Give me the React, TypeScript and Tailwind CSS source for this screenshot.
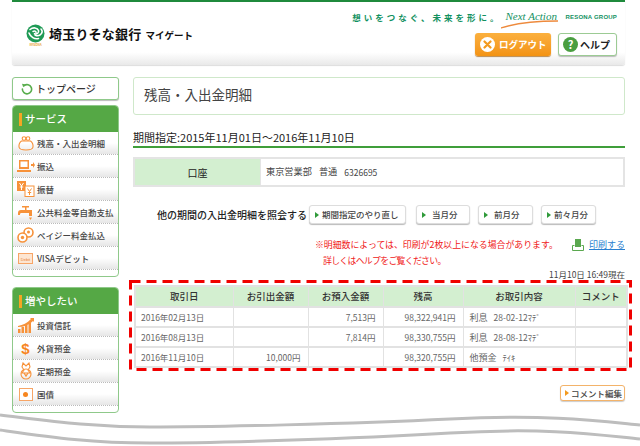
const jp = "font-['Noto_Sans_CJK_JP','Liberation_Sans',sans-serif]";

const serviceMenu = [
  { label: "残高・入出金明細", icon: <PurseIcon /> },
  { label: "振込", icon: <TransferIcon /> },
  { label: "振替", icon: <YenIcon /> },
  { label: "公共料金等自動支払", icon: <FaucetIcon /> },
  { label: "ペイジー料金払込", icon: <CoinsIcon /> },
  { label: "VISAデビット", icon: <DebitIcon /> },
];

const growMenu = [
  { label: "投資信託", icon: <BarsIcon /> },
  { label: "外貨預金", icon: <DollarIcon /> },
  { label: "定期預金", icon: <MedalIcon /> },
  { label: "国債", icon: <BondIcon /> },
];

const rows = [
  { date: "2016年02月13日", out: "", inn: "7,513円", bal: "98,322,941円", memo: "利息", memo2: "28-02-12ﾏﾃﾞ" },
  { date: "2016年08月13日", out: "", inn: "7,814円", bal: "98,330,755円", memo: "利息", memo2: "28-08-12ﾏﾃﾞ" },
  { date: "2016年11月10日", out: "10,000円", inn: "", bal: "98,320,755円", memo: "他預金", memo2: "ﾃｲｷ" },
];

export default function App() {
  return (
    <div className={`${jp} flex h-[446px] w-[640px] flex-col overflow-hidden bg-white text-[#333]`}>
      <Header />
      <div className="mt-3 ml-3 flex w-[613px] gap-[14px]">
        <Sidebar />
        <Main />
      </div>
      <Waves />
    </div>
  );
}

function Header() {
  return (
    <header className="ml-3 flex h-[65px] w-[613px] shrink-0 justify-between rounded-b-[3px] border-t-2 border-[#1f8a3c] bg-gradient-to-b from-white from-80% to-[#e9e9e9] shadow-[0_1px_1px_#ddd]">
      <div className="ml-[14px] mt-[22px] flex h-[25px] items-start">
        <div className="flex w-[19px] flex-col items-center">
          <LogoMark />
          <span className="mt-px text-[3px] leading-none font-bold text-[#e8a33a]">RESONA</span>
        </div>
        <span className="mt-[1px] ml-[4px] text-[13px] leading-[18px] font-bold tracking-[0.2px] text-[#111]">埼玉りそな銀行</span>
        <span className="mt-[3px] ml-[4px] text-[9.500px] leading-[16px] font-bold text-[#111]">マイゲート</span>
      </div>
      <div className="mr-[8px] flex flex-col items-end">
        <div className="mt-[9px] flex h-[20px] items-start">
          <span className="text-[8.500px] leading-[12px] font-bold tracking-[3px] whitespace-nowrap text-[#12915f]">想いをつなぐ、未来を形に。</span>
          <NextAction />
          <span className="ml-[7px] font-['Liberation_Sans',sans-serif] text-[6px] leading-[12px] font-bold tracking-[0.2px] whitespace-nowrap text-[#12915f]">RESONA GROUP</span>
        </div>
        <div className="mt-[2px] flex gap-[7px]">
          <button className="flex h-[23px] w-[76px] items-center rounded-[3px] bg-gradient-to-b from-[#fbb03e] to-[#f39312] pl-[5px] shadow-[0_1px_1px_#b98a50]">
            <span className="flex h-[15px] w-[15px] items-center justify-center rounded-full bg-white">
              <svg width="9" height="9" viewBox="0 0 9 9"><path d="M1.500 1.500l6 6M7.500 1.500l-6 6" stroke="#f39a1e" strokeWidth="2.200" strokeLinecap="round" /></svg>
            </span>
            <span className="ml-[4px] text-[9.500px] leading-none font-bold text-white">ログアウト</span>
          </button>
          <button className="flex h-[23px] w-[59px] items-center rounded-[3px] border border-[#9ccb94] bg-white pl-[4px] shadow-[0_1px_1px_#bbb]">
            <span className="flex h-[15px] w-[15px] items-center justify-center rounded-full bg-[#4a9e41] text-[11px] leading-none font-bold text-white">?</span>
            <span className="ml-[2px] text-[10px] leading-none font-bold text-[#222]">ヘルプ</span>
          </button>
        </div>
      </div>
    </header>
  );
}

function LogoMark() {
  return (
    <svg width="19" height="19" viewBox="0 0 19 19" fill="none">
      <circle cx="9.500" cy="9.500" r="9" fill="#1f9a55" />
      <path d="M4 5.500c3-2.500 7.500-2 8.500 1 .8 2.600-2 4-4 3.200M3 9c1.500 4 5.500 6.500 9.500 5.500" stroke="#fff" strokeWidth="1.600" strokeLinecap="round" />
      <path d="M7 7.500c2-1 3.500 0 3 1.500M9 11c2.500 1.500 5 .5 6.500-1.500 1-1.500.5-3.500-.5-4.500" stroke="#fff" strokeWidth="1.500" strokeLinecap="round" />
    </svg>
  );
}

function NextAction() {
  return (
    <span className="relative block h-[20px] w-[57px]">
      <span className="absolute -top-[1px] left-[4px] font-['Liberation_Serif',serif] text-[11px] leading-[12px] whitespace-nowrap text-[#12915f] italic">Next Action</span>
      <svg className="absolute top-0 left-0" width="57" height="20" viewBox="0 0 57 20" fill="none">
        <path d="M0 17C12 13 32 10 57 10" stroke="#ee8a3c" strokeWidth="1.300" strokeLinecap="round" />
      </svg>
    </span>
  );
}

function Sidebar() {
  return (
    <nav className="flex w-[107px] shrink-0 flex-col">
      <button className="flex h-[23px] items-center rounded-[3px] border border-[#8fc98a] bg-white pl-[8px] shadow-[0_1px_1px_#bbb]">
        <svg width="12" height="12" viewBox="0 0 12 12" fill="none">
          <path d="M3.200 2.600A4.600 4.600 0 1 1 1.400 6" stroke="#58ad4c" strokeWidth="1.600" strokeLinecap="round" />
          <path d="M1 .8l3.700.6-2.500 2.900z" fill="#58ad4c" />
        </svg>
        <span className="ml-[3px] text-[10px] leading-none font-medium text-[#333]">トップページ</span>
      </button>
      <MenuPanel title="サービス" items={serviceMenu} className="mt-[5px] h-[172px]" />
      <MenuPanel title="増やしたい" items={growMenu} className="mt-[10px] h-[126px]" />
    </nav>
  );
}

function MenuPanel({ title, items, className }: { title: string; items: { label: string; icon: React.ReactNode }[]; className: string }) {
  return (
    <section className={`overflow-hidden rounded-[4px] border border-[#8fc98a] bg-white ${className}`}>
      <h2 className="flex h-[26px] items-center bg-[#55a845] pl-[6px] text-[10.500px] font-medium text-white">
        <span className="mr-[3px] h-[13px] w-[3px] bg-[#f5a623]" />
        {title}
      </h2>
      {items.map((item) => (
        <div key={item.label} className="flex h-[23px] items-center border-b border-dotted border-[#bbb] bg-gradient-to-b from-white from-50% to-[#e6e6e6]">
          <span className="flex w-[24px] shrink-0 justify-center pl-[1px]">{item.icon}</span>
          <span className="text-[8.500px] leading-none font-medium whitespace-nowrap text-[#444]">{item.label}</span>
        </div>
      ))}
    </section>
  );
}

function Main() {
  return (
    <main className="w-[492px] shrink-0">
      <h1 className="flex h-[38px] items-center rounded-[3px] border border-[#cfe8ca] pb-[2px] pl-[10px] text-[13.500px] leading-none font-normal text-[#444]">残高・入出金明細</h1>
      <div className="flex h-[33px] items-end border-b-2 border-[#3f9e3a] pb-[3px] text-[11px] leading-none font-normal whitespace-nowrap text-[#222]">期間指定:2015年11月01日～2016年11月10日</div>

      <div className="mt-[9px] flex h-[30px] border-2 border-[#e4e4e4] text-[9.200px]">
        <div className="flex w-[126px] items-center justify-center border-r border-[#e4e4e4] bg-[#d3efd0] text-[10px] text-[#222]">口座</div>
        <div className="flex items-center pl-[5px] text-[#444]">
          東京営業部<span className="ml-[7px]">普通</span><span className="ml-[7px] text-[8.500px]">6326695</span>
        </div>
      </div>

      <div className="mt-[18px] flex h-[19px] items-center">
        <span className="ml-[24px] text-[10px] font-medium whitespace-nowrap text-[#222]">他の期間の入出金明細を照会する</span>
        <PeriodButton label="期間指定のやり直し" className="ml-[2px] w-[97px]" />
        <PeriodButton label="当月分" className="ml-[10px] w-[54px]" gap />
        <PeriodButton label="前月分" className="ml-[8px] w-[55px]" gap />
        <PeriodButton label="前々月分" className="ml-[8px] w-[55px]" />
      </div>

      <div className="mt-[13px] flex h-[32px] justify-between">
        <p className="ml-[182px] text-[8.900px] leading-[16px] whitespace-nowrap text-[#f01818]">
          ※明細数によっては、印刷が2枚以上になる場合があります。
          <br />
          <span className="ml-[8px] tracking-[-0.7px]">詳しくはヘルプをご覧ください。</span>
        </p>
        <a className="flex h-[16px] items-center text-[9px] text-[#2b7fd0] underline">
          <PrintIcon />
          <span className="ml-[5px]">印刷する</span>
        </a>
      </div>

      <div className="h-[11px] text-right text-[8.500px] leading-[11px] text-[#444]">11月10日 16:49現在</div>

      <div className="relative -mr-[7px] -ml-[4px] h-[91px] w-[503px] px-[5px] py-[5px]">
        <table className="w-[492px] table-fixed border-collapse border-2 border-[#e2e2e2] text-[8.500px] text-[#666]">
          <colgroup>
            <col className="w-[98px]" />
            <col className="w-[75px]" />
            <col className="w-[75px]" />
            <col className="w-[80px]" />
            <col className="w-[112px]" />
            <col className="w-[52px]" />
          </colgroup>
          <thead>
            <tr className="h-[21px] bg-[#d3efd0] text-[9.500px] text-[#333]">
              {["取引日", "お引出金額", "お預入金額", "残高", "お取引内容", "コメント"].map((h) => (
                <th key={h} className="border-x border-[#e2e2e2] font-medium">{h}</th>
              ))}
            </tr>
          </thead>
          <tbody>
            {rows.map((r) => (
              <tr key={r.date} className="h-[20px] border-t-2 border-[#e2e2e2] leading-none">
                <td className="border-x border-[#e2e2e2] pl-[5px] whitespace-nowrap">{r.date}</td>
                <td className="border-x border-[#e2e2e2] pr-[7px] text-right">{r.out}</td>
                <td className="border-x border-[#e2e2e2] pr-[7px] text-right">{r.inn}</td>
                <td className="border-x border-[#e2e2e2] pr-[7px] text-right">{r.bal}</td>
                <td className="border-x border-[#e2e2e2] pl-[6px] whitespace-nowrap">
                  <span className="text-[9px]">{r.memo}</span>
                  <span className="ml-[6px]">{r.memo2}</span>
                </td>
                <td className="border-x border-[#e2e2e2]" />
              </tr>
            ))}
          </tbody>
        </table>
        <svg className="absolute top-0 left-0" width="503" height="91" fill="none">
          <rect x="1.500" y="1.500" width="500" height="88" stroke="#f00000" strokeWidth="3" strokeDasharray="10 6" />
        </svg>
      </div>

      <div className="mt-[14px] flex justify-end">
        <button className="flex h-[16px] w-[65px] items-center rounded-[3px] border border-[#f3b36a] bg-white pl-[4px] shadow-[0_1px_1px_#ccc]">
          <span className="h-0 w-0 border-y-[3.500px] border-l-[4px] border-y-transparent border-l-[#f39a1e]" />
          <span className="ml-[2px] text-[8.500px] leading-none font-medium whitespace-nowrap text-[#444]">コメント編集</span>
        </button>
      </div>
    </main>
  );
}

function PeriodButton({ label, className, gap }: { label: string; className: string; gap?: boolean }) {
  return (
    <button className={`flex h-[19px] shrink-0 items-center rounded-[3px] border border-[#ddd] bg-white pl-[5px] shadow-[0_1px_1px_#bbb] ${className}`}>
      <span className="h-0 w-0 shrink-0 border-y-[3px] border-l-[4px] border-y-transparent border-l-[#2f9a3a]" />
      <span className={`${gap ? "ml-[6px]" : "ml-[3px]"} text-[8.500px] leading-none font-medium whitespace-nowrap text-[#444]`}>{label}</span>
    </button>
  );
}

function Waves() {
  return (
    <svg className="-mt-[3px] shrink-0" width="640" height="40" viewBox="0 0 640 40" fill="none">
      <path d="M0 5C50 11 90 17 150 17S350 14 450 9 600 11 640 15" stroke="#bdbdbd" strokeWidth="3" />
      <path d="M0 20C50 27 90 33 150 33S350 29 450 23 600 25 640 29" stroke="#bdbdbd" strokeWidth="3" />
    </svg>
  );
}

/* inline icons */

const o = "#f7923a";

function PurseIcon() {
  return (
    <svg width="16" height="16" viewBox="0 0 16 16" fill="none" stroke={o} strokeWidth="1.100">
      <path d="M3.500 6C1.500 7.500 .8 10 1 12c.2 2 2 3 7 3s6.800-1 7-3c.2-2-.5-4.500-2.500-6z" />
      <circle cx="6" cy="3.500" r="1.800" /><circle cx="10" cy="3.500" r="1.800" />
    </svg>
  );
}
function TransferIcon() {
  return (
    <svg width="18" height="14" viewBox="0 0 18 14" fill={o}>
      <path d="M2 1h10v9H2zM3.500 2.500v5.500h7V2.500zM0 11h14v2H0z" fillRule="evenodd" />
      <path d="M14 5h2V3l2 3-2 3V7h-2z" />
    </svg>
  );
}
function YenIcon() {
  return (
    <svg width="18" height="16" viewBox="0 0 18 16" fill="none">
      <rect x="0" y="0" width="9" height="10" fill={o} />
      <path d="M2.500 2l2 3 2-3M4.500 5v4M2.800 6h3.400" stroke="#fff" strokeWidth="1" />
      <rect x="8" y="5" width="9" height="10.500" fill="#fff" stroke={o} />
      <path d="M10.500 7.500l2 3 2-3M12.500 10.500v3.500M10.800 11.500h3.400" stroke={o} strokeWidth="1" />
    </svg>
  );
}
function FaucetIcon() {
  return (
    <svg width="15" height="15" viewBox="0 0 15 15" fill={o}>
      <path d="M4 1h7v1.500H8.500V5H14v6h-3V8H3.500C2.500 8 2 8.500 2 9.500V10H0V8c0-2 1-3 3-3h4V2.500H4z" />
      <path d="M11 12.500h3l-1.500 2.500z" />
    </svg>
  );
}
function CoinsIcon() {
  return (
    <svg width="17" height="16" viewBox="0 0 17 16" fill="none" stroke={o} strokeWidth="1.600">
      <circle cx="11.500" cy="5.500" r="4.500" />
      <circle cx="5.500" cy="10.500" r="4.500" fill="#fff" />
      <circle cx="5.500" cy="10.500" r="1.700" fill={o} stroke="none" />
      <circle cx="11.500" cy="5" r="1.500" fill={o} stroke="none" />
    </svg>
  );
}
function DebitIcon() {
  return (
    <div className="flex h-[11px] w-[15px] items-end justify-center border border-[#f7a566] bg-[#fde6d2] font-['Liberation_Sans',sans-serif] text-[4px] leading-[6px] text-[#e9822d]">Debit</div>
  );
}
function BarsIcon() {
  return (
    <svg width="16" height="15" viewBox="0 0 16 15" fill={o}>
      <path d="M0 11h2.500v4H0zM3.500 9H6v6H3.500zM7 7h2.500v8H7zM10.500 4.500H13V15h-2.500z" />
      <path d="M0 8c5-1 9-3 13-7l-1-1h4v4l-1-1C11 7 6 9 0 9z" />
    </svg>
  );
}
function DollarIcon() {
  return <span className="font-['Liberation_Sans',sans-serif] text-[15px] leading-none font-bold text-[#f7861f]">$</span>;
}
function MedalIcon() {
  return (
    <svg width="14" height="18" viewBox="0 0 14 18" fill="none" stroke={o} strokeWidth="1.100">
      <circle cx="7" cy="12" r="5" />
      <path d="M4 1l3 3 3-3 1 4-2 3 2 3H3l2-3-2-3z" />
      <path d="M5 11l2 3 2-3" strokeWidth="1.300" />
    </svg>
  );
}
function BondIcon() {
  return (
    <div className="flex h-[13px] w-[14px] items-center justify-center border border-[#f7a566] bg-white">
      <span className="h-[5px] w-[5px] rounded-full bg-[#f7861f]" />
    </div>
  );
}
function PrintIcon() {
  return (
    <svg width="12" height="12" viewBox="0 0 12 12" fill="none">
      <rect x="3" y="0" width="6" height="8" fill="#5aa84f" />
      <path d="M.5 6.500v5h11v-5h-2M.5 6.500h2" stroke="#5aa84f" />
    </svg>
  );
}
